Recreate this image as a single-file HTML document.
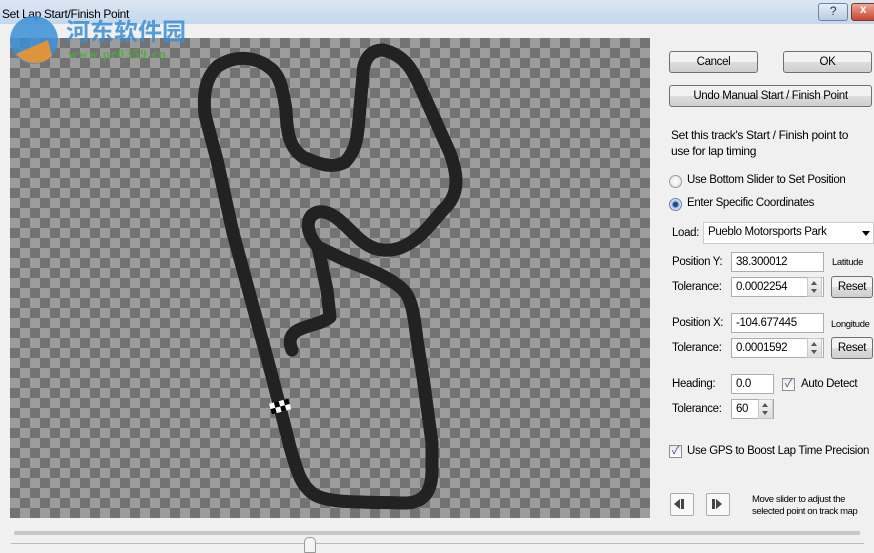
<!DOCTYPE html>
<html><head><meta charset="utf-8">
<style>
*{box-sizing:border-box;margin:0;padding:0}
body{width:874px;height:553px;overflow:hidden;background:#f0f0f0;font-family:"Liberation Sans","Noto Sans CJK SC",sans-serif;font-size:11.5px;letter-spacing:-0.35px;color:#000;position:relative}
.a{position:absolute;white-space:nowrap}
.title{left:0;top:0;width:874px;height:24px;background:linear-gradient(#dbe7f4,#c4d7ec);}
.map{left:10px;top:38px;width:640px;height:480px;background-color:#9c9c9c;
background-image:linear-gradient(45deg,#737373 25%,transparent 25%,transparent 75%,#737373 75%),linear-gradient(45deg,#737373 25%,transparent 25%,transparent 75%,#737373 75%);
background-size:20px 20px;background-position:0 0,10px 10px}
.btn{position:absolute;border:1px solid #707070;border-radius:3px;background:linear-gradient(#f2f2f2 50%,#dddddd 50%,#cfcfcf);text-align:center}
.tb{position:absolute;border:1px solid #abadb3;background:#fff;padding:3px 0 0 4px;height:20px}
.spin{position:absolute;width:15px;height:20px;border:1px solid #c8c8c8;background:linear-gradient(#f4f4f4,#dcdcdc);}
.spin:before{content:"";position:absolute;left:3px;top:3px;border:3px solid transparent;border-bottom:4px solid #555;border-top:0}
.spin:after{content:"";position:absolute;left:3px;bottom:3px;border:3px solid transparent;border-top:4px solid #555;border-bottom:0}
.chk{position:absolute;width:13px;height:13px;border:1px solid #8f8f8f;background:linear-gradient(#e8e8e8,#fff);font-size:11px;line-height:11px;text-align:center;color:#3a4f8a}
.sm{font-size:9.5px}
</style></head><body>
<div class="a title"></div>
<div class="a" style="left:2px;top:7px;font-size:12px">Set Lap Start/Finish Point</div>
<div class="a" style="left:818px;top:3px;width:30px;height:18px;border:1px solid #6f84a0;border-radius:3px;background:linear-gradient(#e6eef8,#b9cbe3);text-align:center;font-size:12px;color:#234">?</div>
<div class="a" style="left:851px;top:3px;width:30px;height:18px;border:1px solid #7a3a2e;border-radius:3px;background:linear-gradient(#e9a898,#c7462e);color:#fff;font-weight:bold;padding-left:8px">x</div>

<div class="a map"></div>
<svg class="a" style="left:0;top:0" width="660" height="530">
<g fill="none" stroke="#222" stroke-width="13" stroke-linecap="round" stroke-linejoin="round">
<path d="M443,210 C460,195 458,175 450,153 L423,93 C413,70 405,55 383,50 C370,50 363,60 363,75 L360,107 C358,135 357,150 345,162 C330,170 315,162 303,157 C290,148 287,135 286,110 C283,90 280,75 270,68 C255,56 235,55 218,66 C205,78 203,95 205,115 L217,160 L233,233 L273,380 L290,447 C298,475 302,487 315,495 C328,502 345,502 407,503 C425,502 432,490 432,470 L432,443 L423,377 L417,340 C413,305 410,295 400,287 C385,275 370,270 345,260 L318,247"/>
<path d="M443,210 C430,225 420,240 400,248 C383,253 370,250 355,235 C340,220 330,210 318,212 C305,215 305,232 318,247 L327,290 L330,317 C320,325 305,325 295,332 C288,338 290,345 292,350"/>
</g>
<g>
<rect x="270" y="401" width="20" height="11" fill="#fff" transform="rotate(-15 280 406)"/>
<g fill="#000" transform="rotate(-15 280 406)"><rect x="275" y="401" width="5" height="5.5"/><rect x="285" y="401" width="5" height="5.5"/><rect x="270" y="406.5" width="5" height="5.5"/><rect x="280" y="406.5" width="5" height="5.5"/></g>
</g>
</svg>
<svg class="a" style="left:8px;top:12px" width="60" height="56"><circle cx="26" cy="28" r="24" fill="#3a8fd6" opacity=".85"/><path d="M8,42 A24,24 0 0 0 44,44 L40,28 Z" fill="#f0952a" opacity=".9"/></svg>
<div class="a" style="left:66px;top:12px;font-size:24px;font-weight:bold;color:#3a8fd6;opacity:.85;letter-spacing:0">河东软件园</div>
<div class="a" style="left:68px;top:46px;font-size:13px;font-weight:bold;color:#4caf3a;font-family:'Liberation Serif',serif;letter-spacing:1px;opacity:.9">www.pc0359.cn</div>

<div class="btn" style="left:669px;top:51px;width:89px;height:22px;line-height:20px">Cancel</div>
<div class="btn" style="left:783px;top:51px;width:89px;height:22px;line-height:20px">OK</div>
<div class="btn" style="left:669px;top:85px;width:203px;height:22px;line-height:20px">Undo Manual Start / Finish Point</div>
<div class="a" style="left:671px;top:127px;font-size:12px;line-height:16px">Set this track's Start / Finish point to<br>use for lap timing</div>
<div class="a" style="left:669px;top:175px;width:13px;height:13px;border-radius:50%;border:1px solid #9a9a9a;background:radial-gradient(#fff,#ddd)"></div>
<div class="a" style="left:687px;top:174px">Use Bottom Slider to Set Position</div>
<div class="a" style="left:669px;top:198px;width:13px;height:13px;border-radius:50%;border:1px solid #6a7f9a;background:radial-gradient(#1d4f87 30%,#8fb6dd 40%,#eef 70%)"></div>
<div class="a" style="left:687px;top:197px">Enter Specific Coordinates</div>

<div class="a" style="left:672px;top:227px">Load:</div>
<div class="tb" style="left:703px;top:222px;width:171px;height:22px;border-color:#ccc">Pueblo Motorsports Park</div>
<div class="a" style="left:862px;top:231px;border:4px solid transparent;border-top:5px solid #000"></div>

<div class="a" style="left:672px;top:256px">Position Y:</div>
<div class="tb" style="left:731px;top:252px;width:93px">38.300012</div>
<div class="a sm" style="left:832px;top:257px">Latitude</div>
<div class="a" style="left:672px;top:281px">Tolerance:</div>
<div class="tb" style="left:731px;top:277px;width:93px">0.0002254</div>
<div class="spin" style="left:807px;top:277px"></div>
<div class="btn" style="left:831px;top:276px;width:42px;height:22px;line-height:20px">Reset</div>

<div class="a" style="left:672px;top:317px">Position X:</div>
<div class="tb" style="left:731px;top:313px;width:93px">-104.677445</div>
<div class="a sm" style="left:831px;top:319px">Longitude</div>
<div class="a" style="left:672px;top:342px">Tolerance:</div>
<div class="tb" style="left:731px;top:338px;width:93px">0.0001592</div>
<div class="spin" style="left:807px;top:338px"></div>
<div class="btn" style="left:831px;top:337px;width:42px;height:22px;line-height:20px">Reset</div>

<div class="a" style="left:672px;top:378px">Heading:</div>
<div class="tb" style="left:731px;top:374px;width:43px">0.0</div>
<div class="chk" style="left:782px;top:378px">✓</div>
<div class="a" style="left:801px;top:378px">Auto Detect</div>
<div class="a" style="left:672px;top:403px">Tolerance:</div>
<div class="tb" style="left:731px;top:399px;width:43px">60</div>
<div class="spin" style="left:758px;top:399px"></div>

<div class="chk" style="left:669px;top:445px">✓</div>
<div class="a" style="left:687px;top:445px">Use GPS to Boost Lap Time Precision</div>

<div class="a" style="left:670px;top:493px;width:24px;height:23px;border:1px solid #aaa;border-radius:2px;background:#f8f8f8"></div>
<div class="a" style="left:674px;top:499px;border:5px solid transparent;border-right:6px solid #444;border-left:0"></div>
<div class="a" style="left:681px;top:499px;width:3px;height:10px;background:#444"></div>
<div class="a" style="left:706px;top:493px;width:24px;height:23px;border:1px solid #aaa;border-radius:2px;background:#f8f8f8"></div>
<div class="a" style="left:712px;top:499px;width:3px;height:10px;background:#444"></div>
<div class="a" style="left:716px;top:499px;border:5px solid transparent;border-left:6px solid #444;border-right:0"></div>
<div class="a sm" style="left:752px;top:494px;line-height:12px;letter-spacing:-0.4px">Move slider to adjust the<br>selected point on track map</div>

<div class="a" style="left:14px;top:531px;width:846px;height:4px;background:#c8c8c8;border-radius:1px"></div>
<div class="a" style="left:11px;top:543px;width:853px;height:1px;background:#bbb"></div>
<div class="a" style="left:304px;top:537px;width:12px;height:16px;border:1px solid #999;border-radius:5px 5px 1px 1px;background:#f4f4f4"></div>
</body></html>
